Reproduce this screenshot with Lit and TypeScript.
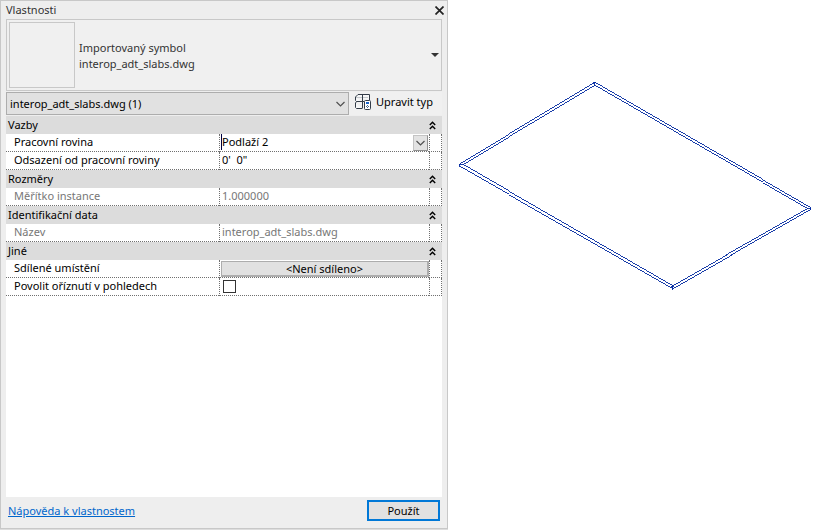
import { LitElement, html, css, svg, nothing } from "lit";
import { customElement, property } from "lit/decorators.js";

type Kind = "plane" | "offset" | "text" | "button" | "check";
interface Row { id: string; label: string; value: string; kind: Kind; }
interface Group { title: string; rows: Row[]; }

const GROUPS: Group[] = [
  {
    title: "Vazby",
    rows: [
      { id: "plane", label: "Pracovní rovina", value: "Podlaží 2", kind: "plane" },
      { id: "offset", label: "Odsazení od pracovní roviny", value: "0'  0\"", kind: "offset" },
    ],
  },
  { title: "Rozměry", rows: [{ id: "scale", label: "Měřítko instance", value: "1.000000", kind: "text" }] },
  { title: "Identifikační data", rows: [{ id: "name", label: "Název", value: "interop_adt_slabs.dwg", kind: "text" }] },
  {
    title: "Jiné",
    rows: [
      { id: "shared", label: "Sdílené umístění", value: "<Není sdíleno>", kind: "button" },
      { id: "clip", label: "Povolit oříznutí v pohledech", value: "", kind: "check" },
    ],
  },
];

const shared = css`
  * { box-sizing: border-box; }
  button, input, select { font: inherit; color: inherit; margin: 0; padding: 0; border-radius: 0; outline: none; }
  svg { display: block; }
`;

const chevron = svg`<path d="M0.5 1 L4.5 5 L8.5 1" fill="none" stroke="#505050" stroke-width="1.2"/>`;

@customElement("property-grid")
export class PropertyGrid extends LitElement {
  @property({ attribute: false }) groups: Group[] = [];

  static styles = [shared, css`
    :host { display: block; flex: 1; background: #fff; color: #000; }
    .grid { width: 100%; border-collapse: separate; border-spacing: 0; table-layout: fixed; }
    .c-label { width: 213px; }
    .c-extra { width: 13px; }
    .grid th, .grid td { height: 18px; padding: 0; font-weight: 400; text-align: left; vertical-align: top; line-height: 16px; white-space: nowrap; }
    .head { background: #dcdcdc; }
    .bar { display: flex; justify-content: space-between; align-items: center; height: 18px; padding: 0 6px 0 2px; }
    .toggle { display: block; width: 7px; height: 9px; border: 0; background: none; }
    .row > * { border-bottom: 1px dotted #707070; }
    .row > td { border-left: 1px dotted #707070; }
    .row > .extra { border-right: 1px dotted #707070; }
    .row > .name { padding-left: 8px; }
    .name label { display: block; }
    .muted { color: #777; }
    .cell { display: flex; align-items: center; height: 17px; padding-left: 2px; }
    .cell.tight { padding-left: 1px; }
    .field { flex: 1; align-self: flex-start; min-width: 0; height: 16px; border: 0; background: none; line-height: 16px; }
    .field.caret { border-left: 1px solid #000040; }
    .drop { display: flex; align-items: center; justify-content: center; width: 15px; height: 16px; margin-right: 1px; background: #e3e3e3; border: 1px solid #c4c4c4; border-right-color: #909090; border-bottom-color: #909090; }
    .push { flex: 1; height: 16px; line-height: 13px; background: #e1e1e1; border: 1px solid #adadad; border-bottom-width: 2px; border-right-width: 2px; }
    .check { appearance: none; width: 13px; height: 13px; border: 1px solid #333; background: #fff; margin-left: 1px; }
  `];

  private editor(r: Row) {
    switch (r.kind) {
      case "plane":
        return html`<div class="cell tight"><input class="field caret" id=${r.id} .value=${r.value}>
          <button class="drop" aria-label="Vybrat rovinu"><svg width="9" height="6">${chevron}</svg></button></div>`;
      case "button":
        return html`<div class="cell tight"><button class="push" id=${r.id}>${r.value}</button></div>`;
      case "check":
        return html`<div class="cell"><input class="check" type="checkbox" id=${r.id}></div>`;
      default:
        return html`<div class="cell"><input class="field" id=${r.id} .value=${r.value} ?readonly=${r.kind === "text"}></div>`;
    }
  }

  render() {
    return html`<table class="grid">
      <colgroup><col class="c-label"><col><col class="c-extra"></colgroup>
      ${this.groups.map(g => html`<tbody>
        <tr><th class="head" colspan="3" scope="rowgroup"><div class="bar"><span>${g.title}</span>
          <button class="toggle" aria-label="Sbalit"><svg width="7" height="9" fill="none" stroke="#000" stroke-width="1.4"><path d="M0.8 4 L3.5 1.2 L6.2 4 M0.8 8 L3.5 5.2 L6.2 8"/></svg></button></div></th></tr>
        ${g.rows.map(r => html`<tr class="row ${r.kind === "text" ? "muted" : ""}">
          <th class="name" scope="row"><label for=${r.id}>${r.label}</label></th>
          <td>${this.editor(r)}</td><td class="extra">${nothing}</td></tr>`)}
      </tbody>`)}
    </table>`;
  }
}

@customElement("model-view")
export class ModelView extends LitElement {
  static styles = css`
    :host { display: block; flex: 1; min-width: 0; background: #fff; }
    .slab { display: block; width: 100%; fill: none; stroke: #0028a0; stroke-width: 0.9; shape-rendering: crispEdges; }
  `;
  render() {
    return html`<svg class="slab" viewBox="0 0 374 300" role="img" aria-label="Deska">
      <path d="M146.5 82.5 L362.5 207.5 V209.5 L224.5 288.5 L11.5 166.5 V163.5 Z"/>
      <path d="M146.5 85.5 L359.5 208.5 L224.5 285.5 L14.5 164.5 Z"/>
      <path d="M146.5 82 V86 M224.5 285 V290 M11 164.5 H15 M359 208.5 H363 M145 82.5 H148 M223 286.5 H226"/>
    </svg>`;
  }
}

@customElement("app-root")
export class AppRoot extends LitElement {
  static styles = [shared, css`
    :host { display: flex; min-height: 100vh; background: #fff; font: 11px/16px "Noto Sans", "Open Sans", sans-serif; color: #333; }
    .panel { display: flex; flex-direction: column; width: 448px; max-width: 100%; margin-bottom: 1px; padding: 0 5px; background: #eee; border: 1px solid #c8c8c8; box-shadow: 0 1px 1px #ddd; }
    .title { display: flex; justify-content: space-between; align-items: center; height: 18px; }
    .title h1 { margin: 0; font-size: inherit; font-weight: 400; }
    .close { border: 0; background: none; margin-right: -2px; }
    .type { display: flex; align-items: center; gap: 4px; height: 72px; padding: 0 2px; text-align: left; background: #f0f0f0; border: 1px solid #c8c8c8; }
    .thumb { width: 66px; height: 66px; border: 1px solid #c8c8c8; }
    .names { flex: 1; padding-top: 2px; }
    .names span { display: block; }
    .bar { display: flex; align-items: flex-start; gap: 6px; margin: 1px 0; color: #000; background: #f0f0f0; }
    .combo { position: relative; flex: 1; }
    .combo select { display: block; appearance: none; width: 100%; height: 23px; padding: 0 20px 0 3px; background: #e1e1e1; border: 1px solid #adadad; }
    .combo svg { position: absolute; right: 4px; top: 9px; pointer-events: none; }
    .edit { display: flex; align-items: center; gap: 5px; width: 87px; height: 20px; border: 0; background: none; white-space: nowrap; }
    .foot { display: flex; align-items: center; justify-content: space-between; padding: 3px 2px 7px; }
    .foot a { color: #0066cc; }
    .apply { width: 73px; height: 21px; color: #000; background: #e1e1e1; border: 2px solid #0078d7; line-height: 16px; }
  `];

  render() {
    return html`
      <section class="panel">
        <header class="title"><h1>Vlastnosti</h1>
          <button class="close" aria-label="Zavřít"><svg width="9" height="9"><path d="M0.5 0.5 L8.5 8.5 M8.5 0.5 L0.5 8.5" stroke="#222" stroke-width="1.7"/></svg></button></header>
        <button class="type"><span class="thumb"></span>
          <span class="names"><span>Importovaný symbol</span><span>interop_adt_slabs.dwg</span></span>
          <svg width="8" height="4"><path d="M0 0 H8 L4 4 Z" fill="#333"/></svg></button>
        <div class="bar">
          <div class="combo"><select aria-label="Filtr výběru"><option>interop_adt_slabs.dwg (1)</option></select>
            <svg width="9" height="6">${chevron}</svg></div>
          <button class="edit"><svg width="16" height="16" fill="none" stroke="#333c48">
            <path d="M0.5 3 L3 0.5 H14.5 V6 M0.5 3 V6.5 L1.5 7.5 H7 M7.5 1 V14 M0.5 9 V13.5 L1.5 14.5 H7.5 M0.5 9 L1.5 7.5 M7.5 7.5 H9" fill="#f6f7f8"/>
            <path d="M1 3.5 H7 M8 3.5 H13" stroke="#c4c8cc"/>
            <rect x="9.5" y="6.5" width="6" height="9" rx="1" fill="#fff"/>
            <path d="M11 9 H14" stroke="#1a64c8" stroke-width="2"/>
            <path d="M11 12.5 H12 M13 12.5 H14 M12 13.5 H13 M12 11.5 H13" stroke="#4a6a90"/></svg>Upravit typ</button>
        </div>
        <property-grid .groups=${GROUPS}></property-grid>
        <footer class="foot"><a href="#napoveda">Nápověda k vlastnostem</a><button class="apply">Použít</button></footer>
      </section>
      <model-view></model-view>`;
  }
}
